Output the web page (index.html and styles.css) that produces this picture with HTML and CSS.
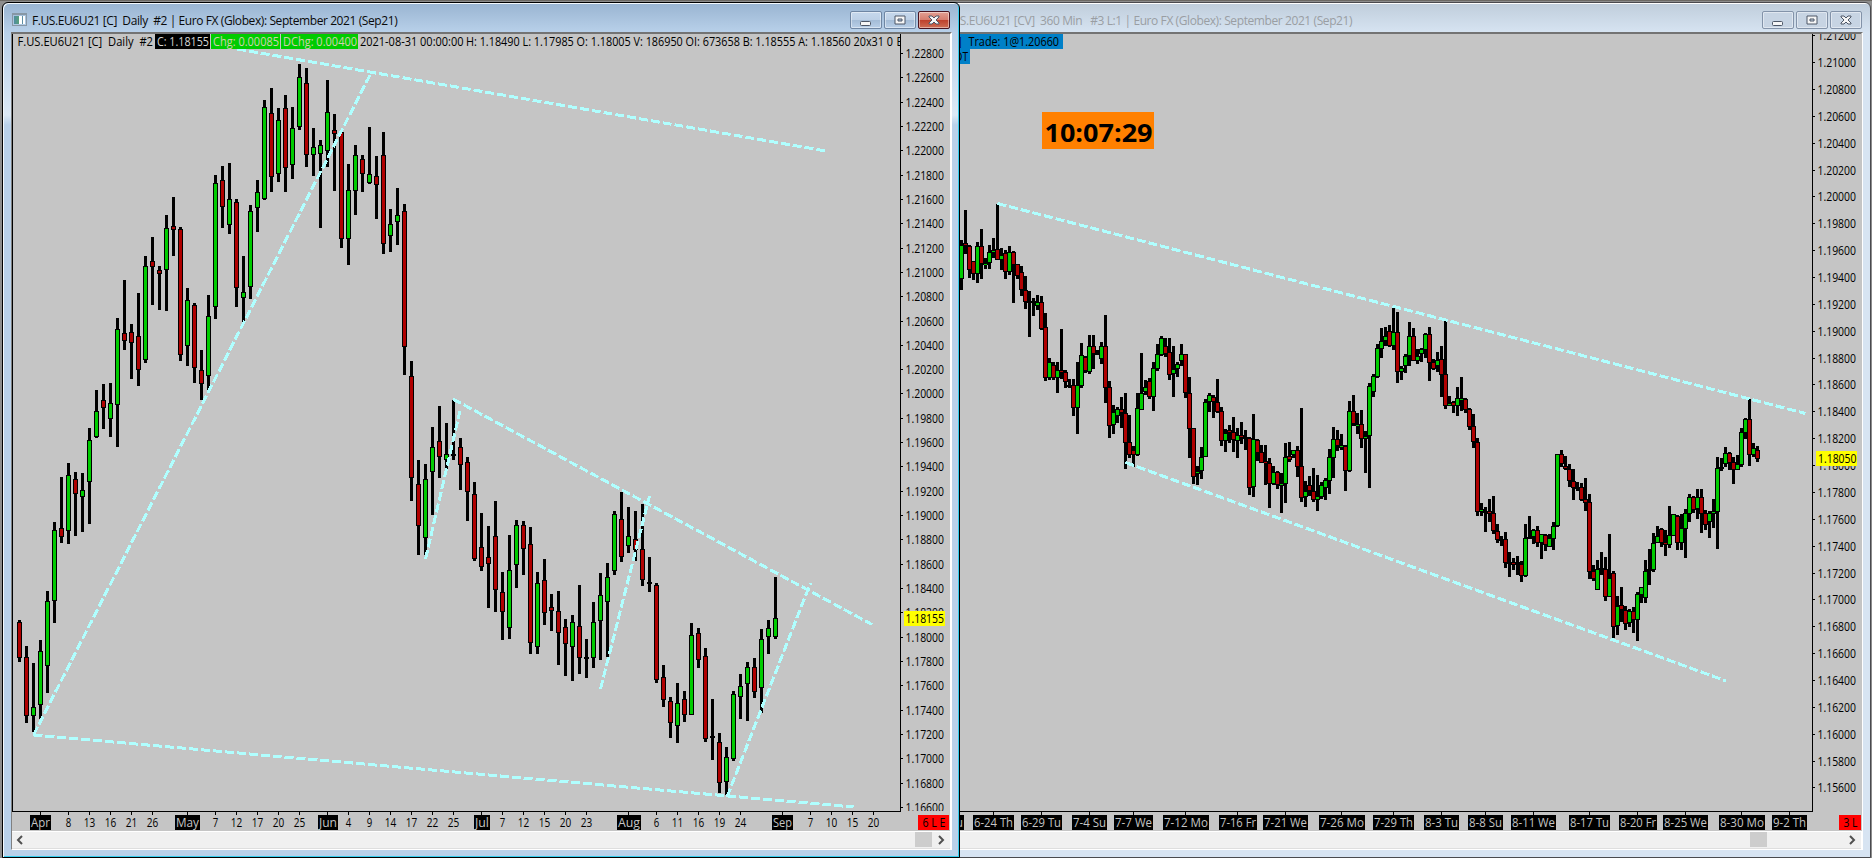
FILE: index.html
```html
<!DOCTYPE html>
<html lang="en">
<head>
  <meta charset="UTF-8">
  <meta name="viewport" content="width=device-width, initial-scale=1.0">
  <title>Euro FX charts</title>
  <link rel="stylesheet" href="styles.css">
</head>
<body>
  <div class="desktop">
    <div class="window window-back">
      <div class="titlebar">
        <div class="app-icon"></div>
        <div class="title title-back">F.US.EU6U21 [CV]&nbsp; 360 Min&nbsp;&nbsp; #3 L:1 | Euro FX (Globex): September 2021 (Sep21)</div>
        <div class="buttons">
          <div class="btn"><svg width="12" height="12"><rect x="0.5" y="7.5" width="10" height="4" rx="1" class="glyph"/></svg></div>
          <div class="btn"><svg width="12" height="12"><path d="M1 2H11V10H1ZM4 5V7H8V5Z" fill-rule="evenodd" class="glyph"/></svg></div>
          <div class="btn"><svg width="12" height="12"><path d="M1 2H4L6 4L8 2H11V3L8 6L11 9V10H8L6 8L4 10H1V9L4 6L1 3Z" class="glyph"/></svg></div>
        </div>
      </div>
      <div class="client">
        <svg id="chart360" class="chart" width="939" height="797" viewBox="923 34 939 797"></svg>
        <div class="scrollbar">
          <svg width="18" height="16"><path d="M10 4L6 8L10 12" class="arrow"/></svg>
          <div class="track"></div>
          <div class="thumb thumb-back"></div>
          <svg width="18" height="16"><path d="M7 4L11 8L7 12" class="arrow"/></svg>
        </div>
      </div>
    </div>

    <div class="window window-front">
      <div class="titlebar">
        <div class="app-icon"></div>
        <div class="title">F.US.EU6U21 [C]&nbsp; Daily&nbsp; #2 | Euro FX (Globex): September 2021 (Sep21)</div>
        <div class="buttons">
          <div class="btn"><svg width="12" height="12"><rect x="0.5" y="7.5" width="10" height="4" rx="1" class="glyph"/></svg></div>
          <div class="btn"><svg width="12" height="12"><path d="M1 2H11V10H1ZM4 5V7H8V5Z" fill-rule="evenodd" class="glyph"/></svg></div>
          <div class="btn btn-close"><svg width="12" height="12"><path d="M1 2H4L6 4L8 2H11V3L8 6L11 9V10H8L6 8L4 10H1V9L4 6L1 3Z" class="glyph"/></svg></div>
        </div>
      </div>
      <div class="client">
        <svg id="chartDaily" class="chart" width="938" height="797" viewBox="12 34 938 797"></svg>
        <div class="scrollbar">
          <svg width="18" height="16"><path d="M10 4L6 8L10 12" class="arrow"/></svg>
          <div class="track"></div>
          <div class="thumb"></div>
          <svg width="18" height="16"><path d="M7 4L11 8L7 12" class="arrow"/></svg>
        </div>
      </div>
    </div>
  </div>

  <script src="script.js"></script>
</body>
</html>
```
FILE: styles.css
```css
body {
  margin: 0;
  font-family: "Open Sans", "Noto Sans", sans-serif;
  font-size: 12px;
  overflow: hidden;
}
.desktop {
  position: relative;
  width: 1872px;
  height: 858px;
  background: linear-gradient(#6b6863 0, #6b6863 1px, #8d8d8d 1px);
}

/* windows */
.window {
  position: absolute;
  top: 2px;
  height: 856px;
  box-sizing: border-box;
  border: 1px solid #000;
  border-radius: 6px 6px 0 0;
  padding: 0 7px 7px 8px;
  display: flex;
  flex-direction: column;
}
.window-front {
  left: 2px;
  width: 958px;
  background: linear-gradient(#99b4d1 0, #b9d1ea 30px, #dce9f6 112px, #b9d1ea 122px);
  box-shadow: inset 1px 1px 0 #f4f9fd, inset -1px -1px 0 #35cdee;
}
.window-back {
  left: 913px;
  width: 958px;
  border-color: #4a4a4e;
  background: linear-gradient(#bfcddb 0, #d7e4f2 30px);
  box-shadow: inset 1px 1px 0 #fff;
}
.titlebar {
  height: 29px;
  flex: none;
  display: flex;
  align-items: center;
}
.app-icon {
  width: 11px;
  height: 8px;
  margin-left: 1px;
  margin-right: 5px;
  padding: 1px;
  border: 1px solid #8797a5;
  border-top-width: 2px;
  background: linear-gradient(90deg, #4f88a8 0, #57a07c 6px, #fff 6px, #fff 9px, #5f8fa5 9px, #5f8fa5 10px, #fff 10px);
  background-clip: content-box;
  background-color: #fff;
  position: relative;
  top: 2px;
}
.title {
  flex: 1;
  white-space: nowrap;
  color: #0a0a0a;
  line-height: 16px;
  padding-top: 7px;
  letter-spacing: -0.41px;
}
.title-back {
  color: #9a9ea3;
}
.buttons {
  display: flex;
  gap: 2px;
  padding-top: 5px;
  margin-right: 2px;
}
.window-back .buttons {
  margin-right: 1px;
}
.btn {
  width: 32px;
  height: 18px;
  box-sizing: border-box;
  border: 1px solid #6f86a3;
  border-radius: 2px;
  background: linear-gradient(#c6d8ec 0, #bdd0e6 50%, #a3bbd6 50%, #b9cfe8 100%);
  box-shadow: inset 0 0 0 1px rgba(255,255,255,0.45);
  display: flex;
  align-items: center;
  justify-content: center;
}
.window-back .btn {
  border-color: #8393a9;
  background: #c7d4e3;
}
.window-front .btn-close {
  border-color: #4a1420;
  background: linear-gradient(#e2a093 0, #d57c6d 50%, #bd3f2b 50%, #cf6e55 100%);
}
.glyph {
  fill: #f6f6f6;
  stroke: #4d5666;
  stroke-width: 1;
}

/* chart area */
.client {
  border: 1px solid #fff;
  border-top: 2px solid #737373;
  border-left-color: #808080;
  border-right-width: 2px;
  background: #f0f0f0;
  display: flex;
  flex-direction: column;
}
.chart {
  display: block;
  background: #c5c5c5;
  flex: none;
}
.scrollbar {
  height: 16px;
  border-top: 1px solid #fff;
  border-bottom: 1px solid #dedede;
  display: flex;
  background: #f0f0f0;
}
.track {
  flex: 1;
}
.thumb {
  width: 17px;
  height: 15px;
  background: #cdcdcd;
}
.thumb-back {
  margin-right: 76px;
}
.arrow {
  fill: none;
  stroke: #505050;
  stroke-width: 2;
}

text {
  font-size: 12px;
  white-space: pre;
}
.shape {
  shape-rendering: crispEdges;
}
.trend {
  stroke: #b0ffff;
  stroke-width: 3;
  stroke-dasharray: 9 3;
  shape-rendering: crispEdges;
}
.clock {
  font-size: 25.5px;
  font-weight: 700;
}
```
FILE: script.js
```js
// bars: high, low, body top, body bottom, direction (g = up, r = down, d = doji)
const daily = `620 662 622 658 r|646 723 657 716 r|663 732 707 716 g|640 719 651 705 g|591 693 601 666 g|522 623 530 601 g|477 543 528 537 r|463 544 475 531 g|472 536 479 494 r|473 532 490 497 g
428 524 440 482 g|390 438 411 437 g|384 429 400 408 r|383 437 403 419 g|318 447 329 405 g|280 350 333 341 r|324 379 332 343 r|293 386 336 370 r|256 363 266 360 g|237 305 261 267 r
266 310 270 274 r|215 311 228 270 g|197 256 226 230 r|227 361 229 355 r|288 366 300 346 g|303 383 305 368 r|350 400 370 384 r|295 390 316 376 g|175 319 183 307 g|166 228 180 207 r
163 234 199 225 g|199 307 202 288 r|256 322 292 298 g|205 299 211 287 g|180 232 192 208 g|100 200 107 199 g|88 192 113 177 r|108 182 120 174 g|95 192 108 168 r|107 179 128 165 g
64 130 77 127 g|68 167 83 155 r|128 176 147 155 g|140 228 145 154 g|80 167 112 151 g|114 191 130 134 r|131 248 132 239 r|164 265 190 239 g|145 215 155 191 g|155 192 159 174 r
127 184 174 183 g|156 219 176 185 r|132 254 155 244 r|209 252 224 236 g|188 245 215 222 g|204 375 211 347 r|361 501 376 478 r|460 555 484 526 r|464 555 479 538 g|427 515 447 472 g
406 478 441 457 r|423 471 454 460 g|400 460 454 456 d|438 490 447 465 r|457 521 462 492 r|482 561 494 559 r|513 571 547 567 r|526 608 557 564 r|501 612 536 590 r|572 640 592 612 r
535 639 570 628 g|520 588 525 565 g|521 575 525 549 r|527 654 544 643 r|572 654 583 647 g|559 625 580 613 r|594 631 607 611 r|591 665 611 633 r|619 676 627 644 r|615 681 622 647 g
585 674 626 658 r|639 678 657 659 d|602 668 622 658 g|573 660 595 621 g|563 657 577 602 g|511 575 514 571 g|492 562 519 557 r|507 553 536 546 g|511 561 539 550 r|504 586 549 580 r
557 592 582 584 d|583 683 585 680 r|665 707 677 700 r|697 738 701 723 r|683 743 703 726 g|691 722 699 715 r|623 715 635 715 g|628 668 633 660 r|648 742 656 739 r|699 760 736 738 d
733 793 742 783 r|747 795 757 782 g|691 761 694 759 g|674 719 686 697 g|662 721 667 684 g|658 698 667 692 r|629 713 639 688 g|620 654 628 637 g|577 639 618 637 g`;

const min360 = `240 290 245 279 g|210 254 243 246 r|245 278 246 270 r|261 280 261 274 r|242 283 246 274 g|229 279 246 264 r|258 269 263 265 g|245 269 252 263 g|238 258 250 252 g|204 260 249 260 r
248 270 255 260 g|250 279 253 272 r|246 275 252 272 g|251 303 252 265 r|264 279 264 276 r|266 296 272 290 r|276 309 290 302 r|291 337 301 303 d|298 316 301 303 d|295 310 302 306 g
296 330 302 329 r|313 381 327 378 r|358 380 362 378 g|362 380 365 378 r|362 393 370 378 g|329 379 370 373 r|370 388 372 382 r|379 388 385 387 d|379 416 385 408 r|362 434 385 408 g
343 388 355 386 g|356 373 357 371 r|335 374 346 372 g|335 369 346 354 r|350 355 353 355 d|342 364 346 359 g|315 403 346 388 r|381 438 387 426 r|405 434 412 425 g|407 423 409 416 g
397 428 409 413 r|393 469 413 443 r|415 458 442 455 r|446 467 450 455 r|393 456 408 455 g|353 410 393 410 g|380 395 387 392 g|378 399 381 397 r|362 411 368 397 g|344 371 354 369 g
336 356 338 355 g|338 357 346 354 r|338 380 352 375 r|346 397 369 374 g|362 377 364 369 g|344 366 354 361 g|354 398 354 393 r|377 458 393 429 r|428 484 428 477 r|466 485 471 474 g
447 479 457 471 g|399 457 402 457 g|393 412 395 402 g|395 418 397 402 r|379 413 402 412 r|407 446 411 441 r|429 452 433 441 g|425 443 430 433 r|417 452 432 440 r|428 458 435 441 g
422 444 435 438 r|430 450 437 439 d|437 495 438 488 r|414 497 439 487 g|439 461 440 453 r|445 463 452 463 r|445 485 461 463 r|458 508 463 484 r|466 485 472 484 g|471 489 472 485 r
473 513 483 486 g|443 503 457 484 g|442 462 456 460 r|450 458 450 455 g|446 477 450 467 r|408 502 466 498 r|481 507 491 497 g|476 496 485 491 r|468 502 491 500 r|475 511 496 500 g
482 499 485 497 g|478 500 480 488 g|449 494 457 481 g|427 478 439 458 g|430 451 439 446 r|434 450 445 448 g|445 491 446 471 r|401 472 411 471 g|395 426 411 424 r|413 434 424 426 g
410 448 424 439 r|431 473 436 439 g|383 488 386 436 g|374 397 376 392 g|344 378 348 377 g|328 358 341 349 g|327 346 336 341 g|325 347 331 346 r|308 350 332 346 g|312 383 332 372 r
366 380 368 372 g|354 373 356 366 g|322 366 336 356 g|328 361 336 361 r|349 364 356 361 g|348 362 349 354 g|333 358 334 350 g|327 381 334 363 r|359 370 362 369 r|352 372 360 366 g
346 397 359 375 r|319 409 374 406 r|396 406 403 406 g|401 413 402 406 r|387 416 398 406 g|377 411 398 401 g|398 413 399 410 r|408 430 409 427 r|414 448 426 442 r|438 516 442 512 r
503 516 509 512 g|507 532 511 513 d|499 522 511 514 r|496 534 513 531 r|524 543 531 540 r|536 546 539 541 d|532 568 539 563 r|552 577 562 564 d|558 570 562 565 r|556 575 562 564 d
561 582 564 576 r|524 577 538 576 g|516 539 537 539 d|529 544 530 537 g|526 547 530 543 r|534 559 534 543 g|534 551 535 545 r|534 547 538 547 g|522 550 526 539 g|454 527 454 526 g
450 467 454 464 r|456 470 466 469 r|464 487 469 481 r|469 500 481 488 r|482 491 487 489 d|483 501 487 500 r|478 511 499 503 r|494 579 502 572 r|565 581 571 579 r|560 590 569 590 g
552 575 568 570 d|557 601 569 597 r|534 597 578 597 g|571 638 573 627 r|596 635 606 626 g|587 622 605 610 r|606 630 610 624 r|609 627 611 623 g|607 633 611 620 r|592 641 594 620 g
587 603 587 595 g|560 603 571 598 g|549 585 569 571 d|533 572 543 570 g|526 543 536 543 g|528 547 529 543 r|530 556 542 545 r|506 548 535 545 g|514 536 514 536 g|515 550 516 543 r
514 550 528 543 g|509 558 513 529 g|494 522 497 514 g|496 513 497 510 r|489 519 497 509 g|489 533 497 514 r|510 530 513 525 r|511 538 513 522 g|499 528 511 514 g|457 549 468 512 g
458 471 467 469 d|447 467 453 464 g|452 470 453 463 r|457 484 462 470 r|455 470 464 470 g|428 467 432 465 g|418 439 419 433 g|399 466 419 455 r|443 457 448 455 g|446 462 450 459 r`;

const dailyTimes = [
  ['Apr', 40, 21], ['8', 68], ['13', 89], ['16', 110], ['21', 131], ['26', 152],
  ['May', 187, 25], ['7', 215], ['12', 236], ['17', 257], ['20', 278], ['25', 299],
  ['Jun', 327, 20], ['4', 348], ['9', 369], ['14', 390], ['17', 411], ['22', 432], ['25', 453],
  ['Jul', 481, 16], ['7', 502], ['12', 523], ['15', 544], ['20', 565], ['23', 586],
  ['Aug', 628, 24], ['6', 656], ['11', 677], ['16', 698], ['19', 719], ['24', 740],
  ['Sep', 782, 21], ['7', 810], ['10', 831], ['15', 852], ['20', 873]
];
const min360Times = [
  ['6-21 Su', 943, 41], ['6-24 Th', 993, 41], ['6-29 Tu', 1041, 41], ['7-4 Su', 1089, 35], ['7-7 We', 1133, 39],
  ['7-12 Mo', 1185, 46], ['7-16 Fr', 1237, 38], ['7-21 We', 1285, 45], ['7-26 Mo', 1341, 46],
  ['7-29 Th', 1393, 41], ['8-3 Tu', 1441, 35], ['8-8 Su', 1485, 35], ['8-11 We', 1533, 45],
  ['8-17 Tu', 1589, 41], ['8-20 Fr', 1637, 38], ['8-25 We', 1685, 45], ['8-30 Mo', 1741, 46], ['9-2 Th', 1789, 35]
];

function rect(x, y, w, h, fill) {
  return `<rect class="shape" x="${x}" y="${y}" width="${w}" height="${h}" fill="${fill}"/>`;
}

// text fitted to a fixed width
function label(x, y, w, str, fill = '#000', cls = '') {
  return `<text class="${cls}" x="${x}" y="${y}" textLength="${w}" lengthAdjust="spacingAndGlyphs" fill="${fill}">${str}</text>`;
}

function bars(data, x0, step) {
  return data.split(/[|\n]/).map((row, i) => {
    const [high, low, top, bottom, dir] = row.split(' ');
    const x = x0 + i * step;
    let out = rect(x, high, 3, low - high, '#000') + rect(x - 1, top, 5, bottom - top, '#000');
    if (dir !== 'd') {
      out += rect(x, +top + 1, 3, Math.max(bottom - top - 2, 1), dir === 'g' ? '#00cc00' : '#b00000');
    }
    return out;
  }).join('');
}

function trends(lines) {
  return lines.map(([x1, y1, x2, y2]) =>
    `<line class="trend" x1="${x1}" y1="${y1}" x2="${x2}" y2="${y2}"/>`).join('');
}

function priceAxis(x, first, count, y0, step) {
  let out = rect(x, 34, 1, 778, '#000');
  for (let i = 0; i < count; i++) {
    const y = Math.round(y0 + i * step);
    out += rect(x + 1, y, 2, 1, '#000') + label(x + 5.5, y + 5, 38.5, (first - i * 0.002).toFixed(5));
  }
  return out;
}

function timeAxis(x, w, items) {
  let out = rect(x, 811, w, 1, '#000');
  items.forEach(([str, cx, boxed]) => {
    out += rect(cx, 812, 1, 3, '#000');
    if (boxed) {
      const left = Math.round(cx + 0.5 - boxed / 2);
      out += rect(left, 815, boxed, 15, '#000') + label(left + 1, 827, boxed - 2, str, '#c5c5c5');
    } else {
      const tw = str.length * 6 - 0.5;
      out += label(cx + 0.5 - tw / 2, 827, tw, str);
    }
  });
  return out;
}

document.getElementById('chartDaily').innerHTML =
  bars(daily, 18, 7) +
  trends([
    [237, 49, 826, 151],
    [33.5, 735, 370, 75],
    [33.5, 735, 853.5, 807],
    [425.5, 559, 460, 411],
    [453, 399, 872, 624.5],
    [600.5, 689, 649.5, 496],
    [727, 797, 810.5, 583]
  ]) +
  rect(12, 34, 888, 15, '#c5c5c5') +
  rect(155, 34, 55, 15, '#000') +
  rect(211, 34, 69, 15, '#00cc00') +
  rect(281, 34, 77, 15, '#00cc00') +
  label(17.5, 46, 135.5, 'F.US.EU6U21 [C]  Daily  #2') +
  label(157, 46, 52, 'C: 1.18155', '#d5d5d5') +
  label(213, 46, 66, 'Chg: 0.00085', '#d0d0b0') +
  label(283, 46, 74, 'DChg: 0.00400', '#d0d0b0') +
  label(360, 46, 103.5, '2021-08-31 00:00:00') +
  label(466, 46, 427, 'H: 1.18490 L: 1.17985 O: 1.18005 V: 186950 OI: 673658 B: 1.18555 A: 1.18560 20x31 0') +
  label(896.5, 46, 6, 'E') +
  rect(901, 34, 49, 777, '#c5c5c5') +
  priceAxis(900, 1.228, 32, 53, 24.32) +
  rect(904, 611, 41, 15, '#ffff00') +
  label(905.5, 623, 38.5, '1.18155') +
  rect(901, 811, 49, 20, '#c5c5c5') +
  timeAxis(12, 889, dailyTimes) +
  rect(12, 34, 1, 778, '#000') +
  rect(918, 815, 31, 15, '#ff0000') +
  label(922.5, 827, 23, '6 L E');

document.getElementById('chart360').innerHTML =
  bars(min360, 960, 4) +
  trends([
    [997.5, 203.5, 1805.5, 413.5],
    [1125.5, 462.5, 1726, 681]
  ]) +
  rect(923, 34, 140, 15, '#0080c8') +
  rect(923, 49, 47, 15, '#0080c8') +
  label(958.5, 46, 3, ']', '#000040') +
  label(968.5, 46, 90.5, 'Trade: 1@1.20660') +
  label(955, 61, 13, 'DT') +
  rect(1042, 112, 112, 37, '#ff8000') +
  label(1044.5, 142, 108, '10:07:29', '#000', 'clock') +
  priceAxis(1812, 1.212, 29, 35.3, 26.86) +
  rect(1816, 451, 41, 15, '#ffff00') +
  label(1818, 463, 38.5, '1.18050') +
  timeAxis(923, 890, min360Times) +
  rect(1839, 815, 22, 15, '#ff0000') +
  label(1843.5, 827, 14, '3 L');
```
